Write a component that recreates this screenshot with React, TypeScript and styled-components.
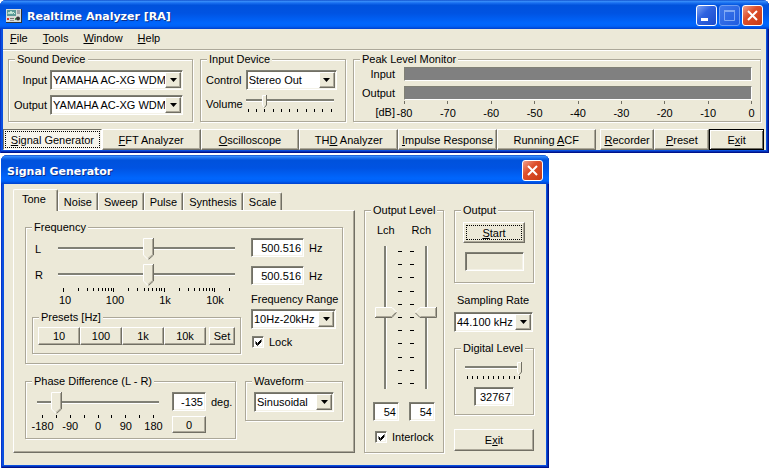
import React, { useState } from 'react';
import styled, { createGlobalStyle, css } from 'styled-components';

const face = '#ece9d8';
const shade = '#aca899';
const dark = '#716f64';
const fieldShade = '#808075';

const svgUrl = (w: number, h: number, body: string) =>
  `url("data:image/svg+xml,${encodeURIComponent(
    `<svg xmlns='http://www.w3.org/2000/svg' width='${w}' height='${h}' fill='none'>${body}</svg>`,
  )}")`;

const thumbDown = svgUrl(
  11,
  22,
  `<path d='M0 0H11V17L5.5 22L0 17Z' fill='${face}'/><path d='M9.5 1V16.5L5 20.5' stroke='${shade}'/><path d='M10.5 0V17L5.5 21.5' stroke='${dark}'/><path d='M10 .5H.5V17L5 21.5' stroke='#fff'/>`,
);
const thumbRight = svgUrl(
  22,
  11,
  `<path d='M0 0H17L22 5.5L17 11H0Z' fill='${face}'/><path d='M1 9.5H16.5L20.5 5.5' stroke='${shade}'/><path d='M0 10.5H17L21.5 5.5' stroke='${dark}'/><path d='M.5 10V.5H17L21.5 5' stroke='#fff'/>`,
);
const thumbLeft = svgUrl(
  22,
  11,
  `<path d='M22 0H5L0 5.5L5 11H22Z' fill='${face}'/><path d='M20.5 1V9.5H5.5' stroke='${shade}'/><path d='M21.5 0V10.5H5L.5 6' stroke='${dark}'/><path d='M21 .5H5L.5 5' stroke='#fff'/>`,
);
const thumbSmall = svgUrl(
  5,
  13,
  `<path d='M0 0H5V10L2.5 13L0 10Z' fill='${face}'/><path d='M4.5 0V10L2.5 12.5' stroke='${dark}'/><path d='M4 .5H.5V10L2 12' stroke='#fff'/>`,
);

const Global = createGlobalStyle`
  *, *::before, *::after { box-sizing: border-box; }
  body {
    margin: 0;
    background: #fff;
    color: #000;
    font: 11px/12px "Liberation Sans", Arial, sans-serif;
  }
  button, input, select { font: inherit; color: inherit; margin: 0; border-radius: 0; }
  u { text-underline-offset: 1px; }
`;

const raised = css`
  border: 1px solid;
  border-color: #fff ${dark} ${dark} #fff;
  box-shadow: inset -1px -1px ${shade};
`;
const sunken = css`
  border: 1px solid;
  border-color: ${fieldShade} #fff #fff ${fieldShade};
  box-shadow: inset 1px 1px ${dark}, inset -1px -1px #f4f2e8;
`;

/* ---- window frames ---- */

const Frame = styled.section`
  display: flex;
  flex-direction: column;
  padding: 0 3px 3px;
  background: #0a50e0;
  border-radius: 6px 6px 0 0;
  box-shadow: inset 1px 0 #0a35c8, inset -1px -1px #00128a, inset -2px -2px #0330b4;
`;
const DialogFrame = styled(Frame)`
  width: max-content;
  margin: 2px 0 0 1px;
`;
const TitleBar = styled.header`
  display: flex;
  align-items: center;
  gap: 5px;
  height: 29px;
  margin: 0 -3px;
  padding: 2px 6px 0;
  border-radius: 6px 6px 0 0;
  background: linear-gradient(
    #0a45c4 0, #3a90fa 4%, #1a70f0 10%, #0052dc 18%, #0053e2 45%, #0066fd 80%, #0062f8 90%, #0040cc 100%
  );
`;
const Title = styled.h1`
  flex: 1;
  margin: 0;
  padding-top: 2px;
  color: #fff;
  font: bold 11px/14px "DejaVu Sans", Verdana, sans-serif;
  text-shadow: 1px 1px #0a2f8c;
`;
const Caption = styled.div`
  display: flex;
  gap: 2px;
`;
const CaptionButton = styled.button<{ $kind: 'plain' | 'dim' | 'close' }>`
  display: flex;
  width: 21px;
  height: 21px;
  padding: 0;
  border: 1px solid ${(p) => (p.$kind === 'dim' ? '#6f9df2' : '#fff')};
  border-radius: 3px;
  background: ${(p) =>
    p.$kind === 'close'
      ? 'linear-gradient(135deg, #f0a08a, #dd4f2c 40%, #c83a14)'
      : p.$kind === 'dim'
        ? 'linear-gradient(135deg, #3f78ea, #1f5be0)'
        : 'linear-gradient(135deg, #7fa4f4, #2f63e0 40%, #1c4bcc)'};
`;
const Client = styled.div`
  background: ${face};
`;

/* ---- main window ---- */

const MenuBar = styled.nav`
  display: flex;
  gap: 15px;
  margin-right: 5px;
  padding: 3px 7px 4px;
  border-bottom: 1px solid ${shade};
  box-shadow: 0 1px #fff;
`;
const MenuItem = styled.button`
  padding: 0;
  border: 0;
  background: none;
  line-height: 13px;
`;
const Groups = styled.div`
  display: flex;
  gap: 7px;
  padding: 3px 5px 7px;
`;
const Fieldset = styled.fieldset<{ $grow?: boolean; $width?: number }>`
  flex: ${(p) => (p.$grow ? '1 1 0' : '0 0 auto')};
  width: ${(p) => (p.$width ? `${p.$width}px` : 'auto')};
  min-width: 0;
  margin: 0;
  padding: 0;
  border: 1px solid ${shade};
  box-shadow: 1px 1px #fff, inset 1px 1px #fff;
`;
const Legend = styled.legend`
  margin-left: 6px;
  padding: 0 2px;
  background: ${face};
  line-height: 12px;
`;
const FieldGrid = styled.div`
  display: grid;
  grid-template-columns: auto 1fr;
  align-items: center;
  justify-items: start;
  gap: 5px 3px;
  padding: 5px 10px 6px 5px;
`;
const FieldLabel = styled.label<{ $end?: boolean }>`
  justify-self: ${(p) => (p.$end ? 'end' : 'start')};
  white-space: nowrap;
`;

const SelectShell = styled.span<{ $width: number }>`
  position: relative;
  display: block;
  width: ${(p) => p.$width}px;
  height: 20px;
  background: #fff;
  ${sunken}
`;
const NativeSelect = styled.select`
  appearance: none;
  display: block;
  width: 100%;
  height: 18px;
  padding: 0 17px 0 2px;
  border: 0;
  background: none;
  overflow: hidden;
`;
const Arrow = styled.span`
  position: absolute;
  top: 1px;
  right: 1px;
  display: flex;
  align-items: center;
  justify-content: center;
  width: 16px;
  height: 16px;
  background: ${face};
  pointer-events: none;
  ${raised}
`;

const Meters = styled.div`
  display: grid;
  grid-template-columns: 41px 1fr;
  grid-template-rows: 19px 15px auto;
  column-gap: 9px;
  align-items: start;
  padding: 2px 8px 0 0;
  line-height: 14px;
  text-align: right;
`;
const Meter = styled.div`
  height: 14px;
  background: #808080;
  border: 1px solid;
  border-color: ${fieldShade} #fff #fff ${fieldShade};
`;
const MeterUnit = styled.span`
  padding-top: 4px;
`;

/* Evenly spread ticks; every item is as wide as its own mark, labels overflow around it. */
const Scale = styled.div<{ $pad?: number; $color?: string; $gap?: number }>`
  display: flex;
  justify-content: space-between;
  padding: 0 ${(p) => p.$pad ?? 0}px;
  line-height: 12px;
  & > span {
    display: flex;
    flex-direction: column;
    align-items: center;
    width: 1px;
    gap: ${(p) => p.$gap ?? 3}px;
    white-space: nowrap;
  }
  & > span::before {
    content: '';
    flex: none;
    width: 1px;
    height: 3px;
    background: ${(p) => p.$color ?? '#000'};
  }
`;

const Strip = styled.div`
  display: flex;
  padding-right: 2px;
`;
const StripButton = styled.button<{ $share: number; $after?: boolean; $look?: 'pressed' | 'default' }>`
  flex: ${(p) => p.$share} 1 0;
  min-width: 0;
  height: 21px;
  margin-right: ${(p) => (p.$after ? 4 : 0)}px;
  padding: 0;
  background: ${face};
  white-space: nowrap;
  ${raised}
  ${(p) =>
    p.$look === 'pressed' &&
    css`
      border-color: ${dark} #fff #fff ${dark};
      box-shadow: none;
      background: #f6f4ec;
      outline: 1px dotted #000;
      outline-offset: -3px;
    `}
  ${(p) =>
    p.$look === 'default' &&
    css`
      border-color: #000;
      box-shadow: inset 1px 1px #fff, inset -1px -1px ${dark};
    `}
`;

/* ---- dialog ---- */

const DialogBody = styled(Client)`
  display: flex;
  padding: 5px 12px 12px 9px;
`;
const TabColumn = styled.div`
  width: 342px;
`;
const TabList = styled.div`
  display: flex;
  align-items: flex-end;
  height: 21px;
`;
const Tab = styled.button<{ $active: boolean }>`
  position: relative;
  z-index: ${(p) => (p.$active ? 1 : 0)};
  height: ${(p) => (p.$active ? 22 : 18)}px;
  margin-bottom: ${(p) => (p.$active ? -1 : 0)}px;
  padding: ${(p) => (p.$active ? '0 11px 3px 8px' : '0 5px')};
  border: 1px solid;
  border-color: #fff ${dark} transparent #fff;
  border-bottom: 0;
  border-radius: 2px 2px 0 0;
  box-shadow: inset -1px 0 ${shade};
  background: ${face};
`;
const TabPanel = styled.div`
  padding: 10px 11px 13px;
  ${raised}
`;
const FrequencyBody = styled.div`
  display: flex;
  justify-content: space-between;
  padding: 5px 6px 9px;
`;
const FrequencyLeft = styled.div`
  width: 209px;
`;
const FrequencyRight = styled.div`
  display: flex;
  flex-direction: column;
  width: 85px;
`;
const Channel = styled.div`
  display: grid;
  grid-template-columns: 23px 177px;
  align-items: center;
  height: 22px;
  margin-bottom: 4px;
  padding-left: 3px;
  line-height: 22px;
`;
const LogScale = styled.div`
  display: flex;
  flex-direction: column;
  width: 177px;
  margin: -2px 0 5px 26px;
`;
const Decades = styled.div`
  display: grid;
  grid-template-columns: repeat(4, 50px);
  margin-left: -18px;
  padding-top: 2px;
  text-align: center;
`;
const PresetRow = styled.div`
  display: flex;
  padding: 4px 5px 8px;
`;
const Button = styled.button<{ $w?: number; $h?: number; $gap?: number; $focus?: boolean }>`
  width: ${(p) => (p.$w ? `${p.$w}px` : '100%')};
  height: ${(p) => p.$h ?? 18}px;
  margin-left: ${(p) => p.$gap ?? 0}px;
  padding: 0;
  background: ${face};
  ${raised}
  ${(p) =>
    p.$focus &&
    css`
      outline: 1px dotted #000;
      outline-offset: -4px;
    `}
`;
const Unit = styled.label<{ $after?: number }>`
  display: flex;
  align-items: center;
  gap: 5px;
  margin-bottom: ${(p) => p.$after ?? 0}px;
`;
const TextBox = styled.input<{ $w: number }>`
  width: ${(p) => p.$w}px;
  height: 19px;
  padding: 0 2px;
  background: #fff;
  text-align: right;
  ${sunken}
`;
const StackLabel = styled.label`
  display: block;
  margin-bottom: 4px;
  white-space: nowrap;
`;
const CheckLabel = styled.label<{ $inset?: boolean }>`
  display: flex;
  align-items: center;
  gap: 5px;
  padding: ${(p) => (p.$inset ? '7px 1px 5px' : '0 0 0 2px')};
`;
const CheckBox = styled.input`
  appearance: none;
  flex: none;
  width: 12px;
  height: 12px;
  background: #fff
    ${svgUrl(7, 7, "<path d='M.5 2.5L2.5 4.5L6.5 .5M.5 3.5L2.5 5.5L6.5 1.5M.5 4.5L2.5 6.5L6.5 2.5' stroke='#000'/>")}
    center no-repeat;
  ${sunken}
  &:not(:checked) { background-image: none; }
`;

const Slider = styled.input<{ $small?: boolean }>`
  appearance: none;
  display: block;
  width: 100%;
  height: ${(p) => (p.$small ? 13 : 22)}px;
  background: linear-gradient(
      ${fieldShade} 0 2px, #fff 2px 3px
    ) 0 ${(p) => (p.$small ? 4 : 9)}px / 100% 3px no-repeat;
  outline: 0;
  &::-webkit-slider-thumb {
    appearance: none;
    width: ${(p) => (p.$small ? 5 : 11)}px;
    height: ${(p) => (p.$small ? 13 : 22)}px;
    background: ${(p) => (p.$small ? thumbSmall : thumbDown)} no-repeat;
  }
`;
const VSlider = styled.input<{ $points: 'left' | 'right' }>`
  appearance: none;
  writing-mode: vertical-lr;
  direction: rtl;
  display: block;
  width: 22px;
  height: 143px;
  background: linear-gradient(90deg, ${fieldShade} 0 2px, #fff 2px 3px)
    ${(p) => (p.$points === 'left' ? 10 : 9)}px 0 / 3px 100% no-repeat;
  outline: 0;
  &::-webkit-slider-thumb {
    appearance: none;
    width: 22px;
    height: 11px;
    background: ${(p) => (p.$points === 'left' ? thumbLeft : thumbRight)} no-repeat;
  }
`;
const SliderBlock = styled.div<{ $width?: number }>`
  display: flex;
  flex-direction: column;
  width: ${(p) => (p.$width ? `${p.$width}px` : '100%')};
  gap: 1px;
`;

const LowerRow = styled.div`
  display: flex;
  align-items: flex-start;
  justify-content: space-between;
  margin-top: 11px;
`;
const PhaseBody = styled.div`
  display: grid;
  grid-template-columns: 122px auto;
  column-gap: 13px;
  padding: 5px 4px 5px 11px;
`;
const PhaseSide = styled.div`
  display: flex;
  flex-direction: column;
  align-items: flex-start;
  gap: 5px;
`;
const WaveformBody = styled.div`
  padding: 5px 8px 8px;
`;

const LevelColumn = styled.div`
  display: flex;
  margin: 15px 10px 0 9px;
`;
const LevelBody = styled.div`
  display: flex;
  flex-direction: column;
  padding: 8px 8px 0;
`;
const Ends = styled.div<{ $pad?: number; $after?: number }>`
  display: flex;
  justify-content: space-between;
  padding: 0 ${(p) => p.$pad ?? 0}px;
  margin-bottom: ${(p) => p.$after ?? 0}px;
`;
const Faders = styled.div`
  display: grid;
  grid-template-columns: 22px 16px 22px;
  column-gap: 1px;
  padding-left: 2px;
  margin-bottom: 13px;
`;
const Rungs = styled.div`
  display: flex;
  flex-direction: column;
  justify-content: space-between;
  padding: 5px 0;
  & > span {
    height: 1px;
    border: solid #000;
    border-width: 0 4px;
  }
`;

const SideColumn = styled.div`
  display: flex;
  flex-direction: column;
  width: 80px;
  padding-top: 15px;
`;
const OutputBody = styled.div`
  display: flex;
  flex-direction: column;
  gap: 9px;
  padding: 6px 8px 11px;
`;
const Readout = styled.output`
  display: block;
  height: 19px;
  margin: 0 1px 0 2px;
  ${sunken}
`;
const Rate = styled.div`
  padding: 11px 0 10px;
  & > label { margin: 0 0 6px 3px; }
`;
const DigitalBody = styled.div`
  display: flex;
  flex-direction: column;
  align-items: center;
  gap: 8px;
  padding: 8px 11px 8px 10px;
`;
const Bottom = styled.div`
  margin-top: auto;
  padding-bottom: 2px;
`;

/* ---- drawings ---- */

const AppIcon = () => (
  <svg width="16" height="14" viewBox="0 0 16 14" aria-hidden="true">
    <rect width="16" height="14" fill="#333" />
    <rect x="0" y="0" width="15" height="13" fill="#d8dcd8" />
    <rect x="1" y="1" width="9" height="6" fill="#5a9a98" />
    <path d="M2 5L3 3L4 5L5 2L6 5L7 3L9 5" stroke="#d0f0e0" fill="none" />
    <path d="M11 2H14M11 4H14" stroke="#667" />
    <rect x="1" y="9" width="2" height="2" fill="#d03030" />
    <rect x="4" y="9" width="4" height="1" fill="#777" />
    <rect x="4" y="11" width="4" height="1" fill="#999" />
    <circle cx="12" cy="9.5" r="2" fill="#333" />
    <rect x="9" y="9" width="1" height="2" fill="#3a9a4a" />
  </svg>
);
const MinimizeGlyph = () => (
  <svg width="19" height="19" aria-hidden="true">
    <path d="M4 13.5H11" stroke="#fff" strokeWidth="3" />
  </svg>
);
const MaximizeGlyph = () => (
  <svg width="19" height="19" fill="none" stroke="#7fa8f4" aria-hidden="true">
    <path d="M4.500 4.500H14.500V14.500H4.500Z" />
    <path d="M4 5H15" strokeWidth="2" />
  </svg>
);
const CloseGlyph = () => (
  <svg width="19" height="19" aria-hidden="true">
    <path d="M5 5L14 14M14 5L5 14" stroke="#fff" strokeWidth="2" />
  </svg>
);

/* Logarithmic ticks from 10 Hz to 20 kHz. */
const LogTicks = () => {
  const marks: number[] = [];
  for (let decade = 10; decade <= 10000; decade *= 10) {
    for (let n = 1; n < 10 && n * decade <= 20000; n++) marks.push(n * decade);
  }
  const x = (hz: number) => Math.round(5 + (166 * Math.log10(hz / 10)) / Math.log10(2000));
  return (
    <svg width="177" height="4" aria-hidden="true">
      {marks.map((hz) => (
        <rect key={hz} x={x(hz)} y="0" width="1" height={Number.isInteger(Math.log10(hz)) ? 4 : 3} fill="#000" />
      ))}
    </svg>
  );
};

/* ---- composed parts ---- */

const Select = ({ id, width, value, label }: { id: string; width: number; value: string; label?: string }) => (
  <SelectShell $width={width}>
    <NativeSelect id={id} aria-label={label} defaultValue={value}>
      <option>{value}</option>
    </NativeSelect>
    <Arrow>
      <svg width="7" height="4" aria-hidden="true">
        <path d="M0 0H7L3.500 4Z" fill="#000" />
      </svg>
    </Arrow>
  </SelectShell>
);

const Ticks = ({ count, pad }: { count: number; pad: number }) => (
  <Scale $pad={pad} aria-hidden="true">
    {Array.from({ length: count }, (_, i) => (
      <span key={i} />
    ))}
  </Scale>
);

const MainWindow = () => (
  <Frame aria-label="Realtime Analyzer">
    <TitleBar>
      <AppIcon />
      <Title>Realtime Analyzer [RA]</Title>
      <Caption>
        <CaptionButton $kind="plain" aria-label="Minimize"><MinimizeGlyph /></CaptionButton>
        <CaptionButton $kind="dim" aria-label="Maximize" disabled><MaximizeGlyph /></CaptionButton>
        <CaptionButton $kind="close" aria-label="Close"><CloseGlyph /></CaptionButton>
      </Caption>
    </TitleBar>
    <Client>
      <MenuBar>
        <MenuItem><u>F</u>ile</MenuItem>
        <MenuItem><u>T</u>ools</MenuItem>
        <MenuItem><u>W</u>indow</MenuItem>
        <MenuItem><u>H</u>elp</MenuItem>
      </MenuBar>
      <Groups>
        <Fieldset $width={185}>
          <Legend>Sound Device</Legend>
          <FieldGrid>
            <FieldLabel $end htmlFor="snd-in">Input</FieldLabel>
            <Select id="snd-in" width={133} value="YAMAHA AC-XG WDM Audio" />
            <FieldLabel $end htmlFor="snd-out">Output</FieldLabel>
            <Select id="snd-out" width={133} value="YAMAHA AC-XG WDM Audio" />
          </FieldGrid>
        </Fieldset>
        <Fieldset $width={146}>
          <Legend>Input Device</Legend>
          <FieldGrid>
            <FieldLabel htmlFor="in-ctl">Control</FieldLabel>
            <Select id="in-ctl" width={91} value="Stereo Out" />
            <FieldLabel htmlFor="in-vol">Volume</FieldLabel>
            <SliderBlock $width={88}>
              <Slider $small type="range" id="in-vol" min={0} max={10} defaultValue={2} />
              <Ticks count={11} pad={2} />
            </SliderBlock>
          </FieldGrid>
        </Fieldset>
        <Fieldset $grow>
          <Legend>Peak Level Monitor</Legend>
          <Meters>
            <span>Input</span>
            <Meter role="meter" aria-label="Input peak" aria-valuemin={-80} aria-valuemax={0} aria-valuenow={-80} />
            <span>Output</span>
            <Meter role="meter" aria-label="Output peak" aria-valuemin={-80} aria-valuemax={0} aria-valuenow={-80} />
            <MeterUnit>[dB]</MeterUnit>
            <Scale $color="#716f64">
              {[-80, -70, -60, -50, -40, -30, -20, -10, 0].map((db) => (
                <span key={db}>{db}</span>
              ))}
            </Scale>
          </Meters>
        </Fieldset>
      </Groups>
      <Strip>
        <StripButton $share={99} $look="pressed" aria-pressed="true"><u>S</u>ignal Generator</StripButton>
        <StripButton $share={99}><u>F</u>FT Analyzer</StripButton>
        <StripButton $share={99}><u>O</u>scilloscope</StripButton>
        <StripButton $share={99}>TH<u>D</u> Analyzer</StripButton>
        <StripButton $share={99}><u>I</u>mpulse Response</StripButton>
        <StripButton $share={99} $after>Running <u>A</u>CF</StripButton>
        <StripButton $share={54}><u>R</u>ecorder</StripButton>
        <StripButton $share={54}><u>P</u>reset</StripButton>
        <StripButton $share={54} $look="default">E<u>x</u>it</StripButton>
      </Strip>
    </Client>
  </Frame>
);

const tabs = ['Tone', 'Noise', 'Sweep', 'Pulse', 'Synthesis', 'Scale'];
const logPosition = Math.log10(500.516);

const Generator = () => {
  const [active, setActive] = useState('Tone');
  return (
    <DialogFrame aria-label="Signal Generator">
      <TitleBar>
        <Title>Signal Generator</Title>
        <CaptionButton $kind="close" aria-label="Close"><CloseGlyph /></CaptionButton>
      </TitleBar>
      <DialogBody>
        <TabColumn>
          <TabList role="tablist">
            {tabs.map((name) => (
              <Tab
                key={name}
                role="tab"
                aria-selected={name === active}
                $active={name === active}
                onClick={() => setActive(name)}
              >
                {name}
              </Tab>
            ))}
          </TabList>
          <TabPanel role="tabpanel">
            <Fieldset>
              <Legend>Frequency</Legend>
              <FrequencyBody>
                <FrequencyLeft>
                  {['L', 'R'].map((ch) => (
                    <Channel key={ch}>
                      <label htmlFor={`freq-${ch}`}>{ch}</label>
                      <Slider
                        type="range"
                        id={`freq-${ch}`}
                        min={1}
                        max={4.301}
                        step="any"
                        defaultValue={logPosition}
                      />
                    </Channel>
                  ))}
                  <LogScale>
                    <LogTicks />
                    <Decades>
                      <span>10</span>
                      <span>100</span>
                      <span>1k</span>
                      <span>10k</span>
                    </Decades>
                  </LogScale>
                  <Fieldset>
                    <Legend>Presets [Hz]</Legend>
                    <PresetRow>
                      <Button $w={42}>10</Button>
                      <Button $w={42}>100</Button>
                      <Button $w={42}>1k</Button>
                      <Button $w={42}>10k</Button>
                      <Button $w={26} $gap={3}>Set</Button>
                    </PresetRow>
                  </Fieldset>
                </FrequencyLeft>
                <FrequencyRight>
                  <Unit $after={9}><TextBox $w={53} defaultValue="500.516" aria-label="L frequency" />Hz</Unit>
                  <Unit $after={8}><TextBox $w={53} defaultValue="500.516" aria-label="R frequency" />Hz</Unit>
                  <StackLabel htmlFor="range">Frequency Range</StackLabel>
                  <Select id="range" width={85} value="10Hz-20kHz" />
                  <CheckLabel $inset>
                    <CheckBox type="checkbox" defaultChecked />
                    Lock
                  </CheckLabel>
                </FrequencyRight>
              </FrequencyBody>
            </Fieldset>
            <LowerRow>
              <Fieldset $width={211}>
                <Legend>Phase Difference (L - R)</Legend>
                <PhaseBody>
                  <SliderBlock>
                    <Slider type="range" min={-180} max={180} defaultValue={-135} aria-label="Phase difference" />
                    <Scale $pad={5} $gap={2}>
                      {['-180', '', '-90', '', '0', '', '90', '', '180'].map((t, i) => (
                        <span key={i}>{t}</span>
                      ))}
                    </Scale>
                  </SliderBlock>
                  <PhaseSide>
                    <Unit><TextBox $w={34} defaultValue="-135" aria-label="Phase in degrees" />deg.</Unit>
                    <Button $w={34} $h={17}>0</Button>
                  </PhaseSide>
                </PhaseBody>
              </Fieldset>
              <Fieldset $width={98}>
                <Legend>Waveform</Legend>
                <WaveformBody>
                  <Select id="wave" width={80} value="Sinusoidal" label="Waveform" />
                </WaveformBody>
              </Fieldset>
            </LowerRow>
          </TabPanel>
        </TabColumn>
        <LevelColumn>
          <Fieldset $width={80}>
            <Legend>Output Level</Legend>
            <LevelBody>
              <Ends $pad={4} $after={10}>
                <label htmlFor="lch">Lch</label>
                <label htmlFor="rch">Rch</label>
              </Ends>
              <Faders>
                <VSlider $points="right" type="range" id="lch" min={0} max={100} defaultValue={54} />
                <Rungs aria-hidden="true">
                  {Array.from({ length: 11 }, (_, i) => (
                    <span key={i} />
                  ))}
                </Rungs>
                <VSlider $points="left" type="range" id="rch" min={0} max={100} defaultValue={54} />
              </Faders>
              <Ends $after={10}>
                <TextBox $w={26} defaultValue="54" aria-label="Lch level" />
                <TextBox $w={26} defaultValue="54" aria-label="Rch level" />
              </Ends>
              <CheckLabel>
                <CheckBox type="checkbox" defaultChecked />
                Interlock
              </CheckLabel>
            </LevelBody>
          </Fieldset>
        </LevelColumn>
        <SideColumn>
          <Fieldset>
            <Legend>Output</Legend>
            <OutputBody>
              <Button $h={21} $focus><u>S</u>tart</Button>
              <Readout />
            </OutputBody>
          </Fieldset>
          <Rate>
            <StackLabel htmlFor="rate">Sampling Rate</StackLabel>
            <Select id="rate" width={79} value="44.100 kHz" />
          </Rate>
          <Fieldset>
            <Legend>Digital Level</Legend>
            <DigitalBody>
              <SliderBlock>
                <Slider $small type="range" min={0} max={32767} defaultValue={32767} aria-label="Digital level" />
                <Ticks count={11} pad={2} />
              </SliderBlock>
              <TextBox $w={40} defaultValue="32767" aria-label="Digital level value" />
            </DigitalBody>
          </Fieldset>
          <Bottom>
            <Button $h={22}>E<u>x</u>it</Button>
          </Bottom>
        </SideColumn>
      </DialogBody>
    </DialogFrame>
  );
};

export default function App() {
  return (
    <>
      <Global />
      <main>
        <MainWindow />
        <Generator />
      </main>
    </>
  );
}
